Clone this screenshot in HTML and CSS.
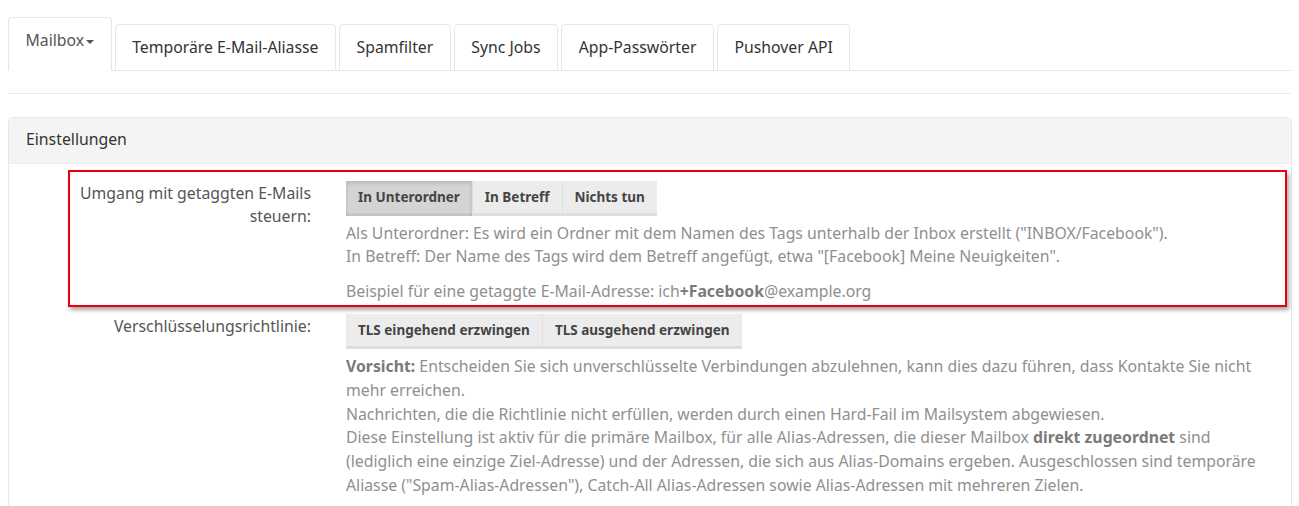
FILE: index.html
```html
<!DOCTYPE html>
<html lang="de">
<head>
<meta charset="utf-8">
<title>Mailbox</title>
<link rel="stylesheet" href="styles.css">
</head>
<body>
<ul class="tabs">
  <li class="tab active">Mailbox<span class="caret"></span></li>
  <li class="tab">Temporäre E-Mail-Aliasse</li>
  <li class="tab">Spamfilter</li>
  <li class="tab">Sync Jobs</li>
  <li class="tab">App-Passwörter</li>
  <li class="tab">Pushover API</li>
</ul>
<hr class="sep">
<div class="panel">
  <div class="panel-heading">Einstellungen</div>
  <div class="panel-body">
    <div class="row highlight">
      <label class="row-label">Umgang mit getaggten E-Mails steuern:</label>
      <div class="row-control">
        <div class="btn-group">
          <span class="btn active">In Unterordner</span><span class="btn">In Betreff</span><span class="btn">Nichts tun</span>
        </div>
        <p class="help">Als Unterordner: Es wird ein Ordner mit dem Namen des Tags unterhalb der Inbox erstellt ("INBOX/Facebook").<br>In Betreff: Der Name des Tags wird dem Betreff angefügt, etwa "[Facebook] Meine Neuigkeiten".</p>
        <p class="help help-last">Beispiel für eine getaggte E-Mail-Adresse: ich<b>+Facebook</b>@example.org</p>
      </div>
    </div>
    <div class="row plain">
      <label class="row-label">Verschlüsselungsrichtlinie:</label>
      <div class="row-control">
        <div class="btn-group">
          <span class="btn">TLS eingehend erzwingen</span><span class="btn">TLS ausgehend erzwingen</span>
        </div>
        <p class="help help-long"><b>Vorsicht:</b> Entscheiden Sie sich unverschlüsselte Verbindungen abzulehnen, kann dies dazu führen, dass Kontakte Sie nicht mehr erreichen.<br>Nachrichten, die die Richtlinie nicht erfüllen, werden durch einen Hard-Fail im Mailsystem abgewiesen.<br>Diese Einstellung ist aktiv für die primäre Mailbox, für alle Alias-Adressen, die dieser Mailbox <b>direkt zugeordnet</b> sind (lediglich eine einzige Ziel-Adresse) und der Adressen, die sich aus Alias-Domains ergeben. Ausgeschlossen sind temporäre Aliasse ("Spam-Alias-Adressen"), Catch-All Alias-Adressen sowie Alias-Adressen mit mehreren Zielen.</p>
      </div>
    </div>
  </div>
</div>
</body>
</html>
```
FILE: styles.css
```css
html, body {
  margin: 0;
  padding: 0;
  background: #fff;
}
body {
  padding: 0 8px;
  font-family: "Noto Sans", "Open Sans", sans-serif;
  font-size: 15.8px;
  color: #555;
  overflow: hidden;
  height: 506px;
}
.tabs {
  list-style: none;
  margin: 0;
  padding: 17px 0 0 0;
  display: flex;
  align-items: flex-end;
  border-bottom: 1px solid #e6e6e6;
}
.tab {
  margin-right: 3px;
  margin-bottom: -1px;
  padding: 0 16.5px;
  height: 45px;
  line-height: 45px;
  border: 1px solid #e6e6e6;
  border-radius: 4px 4px 0 0;
  color: #333;
  background: #fff;
}
.tab.active {
  height: 52px;
  line-height: 45px;
  border-bottom-color: #fff;
  color: #555;
  margin-right: 3px;
}
.caret {
  display: inline-block;
  width: 0;
  height: 0;
  margin-left: 2px;
  vertical-align: middle;
  border-top: 4px solid #555;
  border-left: 4px solid transparent;
  border-right: 4px solid transparent;
}
.sep {
  margin: 22px 0 0 0;
  border: 0;
  border-top: 1px solid #ececec;
  height: 0;
}
.panel {
  margin: 23px 0 0 0;
  width: 1282px;
  border: 1px solid #e8e8e8;
  border-radius: 4px;
  background: #fff;
  height: 400px;
}
.panel-heading {
  background: #f4f4f4;
  padding: 0 17px;
  height: 45px;
  line-height: 42px;
  color: #333;
  border-bottom: 1px solid #eee;
  border-radius: 3px 3px 0 0;
}
.panel-body {
  padding: 6px 0 0 0;
}
.row {
  display: flex;
  align-items: flex-start;
}
.row-label {
  text-align: right;
  line-height: 23px;
  padding-top: 1px;
  margin-right: 35px;
  color: #555;
}
.highlight {
  margin-left: 59px;
  margin-right: 4px;
  border: 2px solid #e8000b;
  box-shadow: 2px 3px 4px rgba(0, 0, 0, 0.35);
  padding: 9px 0 2px 0;
}
.highlight .row-label {
  width: 241px;
}
.plain {
  padding-top: 7px;
}
.plain .row-label {
  width: 302px;
}
.row-control {
  flex: 1;
  min-width: 0;
}
.btn-group {
  display: inline-flex;
}
.btn {
  display: inline-block;
  height: 35px;
  line-height: 33px;
  padding: 0 12px;
  font-size: 13.5px;
  font-weight: bold;
  color: #444;
  background: #ececec;
  border-right: 1px solid #e0e0e0;
  box-sizing: border-box;
  box-shadow: inset 0 -3px 0 #dedede;
}
.btn:last-child {
  border-right: 0;
}
.btn.active {
  background: #d4d4d4;
  box-shadow: inset 0 2px 4px rgba(0, 0, 0, 0.15), inset 0 -3px 0 #c8c8c8;
}
.help {
  margin: 6px 0 0 0;
  color: #8f8f8f;
  line-height: 23px;
}
.help b {
  color: #7a7a7a;
}
.help-last {
  margin-top: 12px;
}
.help-long {
  line-height: 23.8px;
  margin-right: 15px;
}
```
